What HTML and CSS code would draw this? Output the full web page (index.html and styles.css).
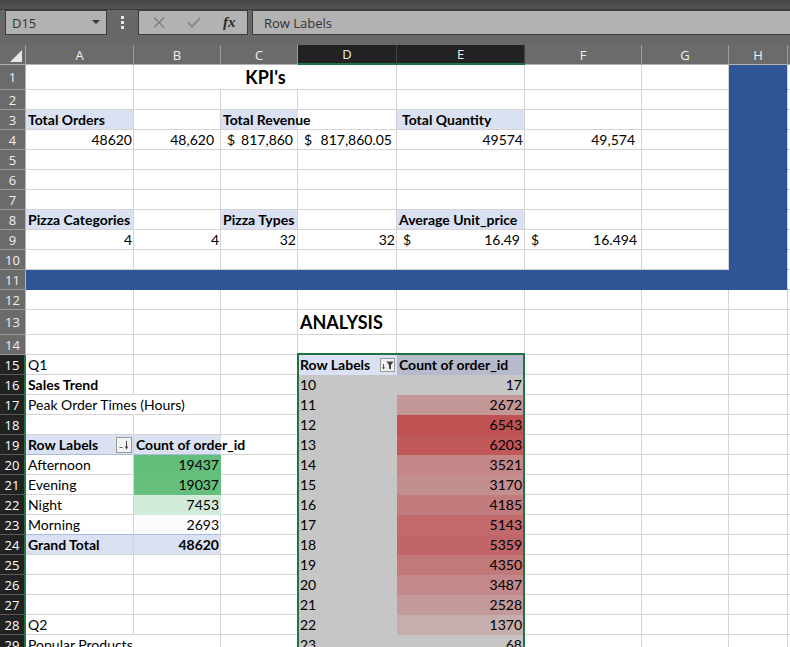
FILE: index.html
```html
<!DOCTYPE html>
<html>
<head>
<meta charset="utf-8">
<title>Pizza Sales - KPI's</title>
<link rel="stylesheet" href="styles.css">
</head>
<body>
<div class="app">
  <div class="topstrip"></div>
  <div class="fbar">
    <div class="namebox"><span>D15</span><svg width="8" height="5" viewBox="0 0 8 5"><polygon points="0,0 8,0 4,4" fill="#333"/></svg></div>
    <div class="dots"><svg width="3" height="13" viewBox="0 0 3 13"><rect x="0" y="0" width="3" height="3" fill="#e6e6e6"/><rect x="0" y="5" width="3" height="3" fill="#e6e6e6"/><rect x="0" y="10" width="3" height="3" fill="#e6e6e6"/></svg></div>
    <div class="btns">
      <span class="fb"><svg width="12" height="11" viewBox="0 0 12 11"><path d="M1 0.5L11 10.5M11 0.5L1 10.5" stroke="#7e7e7e" stroke-width="1.4" fill="none"/></svg></span>
      <span class="fb"><svg width="14" height="11" viewBox="0 0 14 11"><path d="M1 5.5L5 9.5L13 1" stroke="#7e7e7e" stroke-width="1.6" fill="none"/></svg></span>
      <span class="fb fx">fx</span>
    </div>
    <div class="finput">Row Labels</div>
  </div>

  <div class="sheet">
    <!-- column headers -->
    <div class="corner"><svg width="25" height="19" viewBox="0 0 25 19"><polygon points="10,17 22,17 22,5" fill="#e8e8e8"/></svg></div>
    <div class="ch">A</div><div class="ch">B</div><div class="ch">C</div><div class="ch cs">D</div><div class="ch cs">E</div><div class="ch">F</div><div class="ch">G</div><div class="ch">H</div><div class="ch"></div>

    <!-- row 1 -->
    <div class="rh">1</div><div class="c"></div><div class="c title">KPI's</div><div class="c"></div><div class="c"></div><div class="c"></div><div class="c hb"></div><div class="c"></div>
    <!-- row 2 -->
    <div class="rh">2</div><div class="c"></div><div class="c"></div><div class="c"></div><div class="c"></div><div class="c"></div><div class="c"></div><div class="c"></div><div class="c hb"></div><div class="c"></div>
    <!-- row 3 -->
    <div class="rh">3</div><div class="c lb b">Total Orders</div><div class="c"></div><div class="c lb b ov">Total Revenue</div><div class="c"></div><div class="c lb b ind">Total Quantity</div><div class="c"></div><div class="c"></div><div class="c hb"></div><div class="c"></div>
    <!-- row 4 -->
    <div class="rh">4</div><div class="c r">48620</div><div class="c r cm">48,620</div><div class="c acc"><span>$</span><span>817,860</span></div><div class="c acc"><span>$</span><span>817,860.05</span></div><div class="c r">49574</div><div class="c r cm">49,574</div><div class="c"></div><div class="c hb"></div><div class="c"></div>
    <!-- row 5 -->
    <div class="rh">5</div><div class="c"></div><div class="c"></div><div class="c"></div><div class="c"></div><div class="c"></div><div class="c"></div><div class="c"></div><div class="c hb"></div><div class="c"></div>
    <!-- row 6 -->
    <div class="rh">6</div><div class="c"></div><div class="c"></div><div class="c"></div><div class="c"></div><div class="c"></div><div class="c"></div><div class="c"></div><div class="c hb"></div><div class="c"></div>
    <!-- row 7 -->
    <div class="rh">7</div><div class="c"></div><div class="c"></div><div class="c"></div><div class="c"></div><div class="c"></div><div class="c"></div><div class="c"></div><div class="c hb"></div><div class="c"></div>
    <!-- row 8 -->
    <div class="rh">8</div><div class="c lb b">Pizza Categories</div><div class="c"></div><div class="c lb b">Pizza Types</div><div class="c"></div><div class="c lb b">Average Unit_price</div><div class="c"></div><div class="c"></div><div class="c hb"></div><div class="c"></div>
    <!-- row 9 -->
    <div class="rh">9</div><div class="c r">4</div><div class="c r">4</div><div class="c r">32</div><div class="c r">32</div><div class="c acc"><span>$</span><span>16.49</span></div><div class="c acc"><span>$</span><span>16.494</span></div><div class="c"></div><div class="c hb"></div><div class="c"></div>
    <!-- row 10 -->
    <div class="rh">10</div><div class="c"></div><div class="c"></div><div class="c"></div><div class="c"></div><div class="c"></div><div class="c"></div><div class="c"></div><div class="c hb"></div><div class="c"></div>
    <!-- row 11 -->
    <div class="rh">11</div><div class="c bl"></div><div class="c bl"></div><div class="c bl"></div><div class="c bl"></div><div class="c bl"></div><div class="c bl"></div><div class="c bl"></div><div class="c hb"></div><div class="c"></div>
    <!-- row 12 -->
    <div class="rh">12</div><div class="c"></div><div class="c"></div><div class="c"></div><div class="c"></div><div class="c"></div><div class="c"></div><div class="c"></div><div class="c"></div><div class="c"></div>
    <!-- row 13 -->
    <div class="rh">13</div><div class="c"></div><div class="c"></div><div class="c"></div><div class="c big">ANALYSIS</div><div class="c"></div><div class="c"></div><div class="c"></div><div class="c"></div><div class="c"></div>
    <!-- row 14 -->
    <div class="rh">14</div><div class="c"></div><div class="c"></div><div class="c"></div><div class="c"></div><div class="c"></div><div class="c"></div><div class="c"></div><div class="c"></div><div class="c"></div>
    <!-- row 15 -->
    <div class="rh d">15</div><div class="c">Q1</div><div class="c"></div><div class="c"></div>
    <div class="c pv ph1"><span>Row Labels</span><span class="pbtn"><svg width="13" height="12" viewBox="0 0 13 12"><path d="M2.5 5V10" stroke="#555" stroke-width="1"/><polygon points="0.8,8.3 4.2,8.3 2.5,10.6" fill="#555"/><polygon points="5.5,2.5 12.5,2.5 10,6 10,10.5 8,9.5 8,6" fill="#3d3d3d"/></svg></span></div>
    <div class="c pv ph2">Count of order_id</div><div class="c"></div><div class="c"></div><div class="c"></div><div class="c"></div>
    <!-- row 16 -->
    <div class="rh d">16</div><div class="c b">Sales Trend</div><div class="c"></div><div class="c"></div><div class="c pv pd">10</div><div class="c pv pe" style="background:rgb(198,198,198)">17</div><div class="c"></div><div class="c"></div><div class="c"></div><div class="c"></div>
    <!-- row 17 -->
    <div class="rh d">17</div><div class="c ov">Peak Order Times (Hours)</div><div class="c"></div><div class="c"></div><div class="c pv pd">11</div><div class="c pv pe" style="background:rgb(196,151,151)">2672</div><div class="c"></div><div class="c"></div><div class="c"></div><div class="c"></div>
    <!-- row 18 -->
    <div class="rh d">18</div><div class="c"></div><div class="c"></div><div class="c"></div><div class="c pv pd">12</div><div class="c pv pe" style="background:rgb(192,81,83)">6543</div><div class="c"></div><div class="c"></div><div class="c"></div><div class="c"></div>
    <!-- row 19 -->
    <div class="rh d">19</div>
    <div class="c lb b pt"><span>Row Labels</span><span class="sbtn"><svg width="14" height="14" viewBox="0 0 14 14"><path d="M2.5 9.5H5.5" stroke="#666" stroke-width="1"/><path d="M9.5 3V10.5" stroke="#444" stroke-width="1"/><polygon points="7.6,8.6 11.4,8.6 9.5,11.4" fill="#444"/></svg></span></div>
    <div class="c lb b pt ov">Count of order_id</div><div class="c"></div><div class="c pv pd">13</div><div class="c pv pe" style="background:rgb(193,88,89)">6203</div><div class="c"></div><div class="c"></div><div class="c"></div><div class="c"></div>
    <!-- row 20 -->
    <div class="rh d">20</div><div class="c">Afternoon</div><div class="c r nb" style="background:rgb(99,190,123)">19437</div><div class="c"></div><div class="c pv pd">14</div><div class="c pv pe" style="background:rgb(195,135,136)">3521</div><div class="c"></div><div class="c"></div><div class="c"></div><div class="c"></div>
    <!-- row 21 -->
    <div class="rh d">21</div><div class="c">Evening</div><div class="c r nb" style="background:rgb(103,191,126)">19037</div><div class="c"></div><div class="c pv pd">15</div><div class="c pv pe" style="background:rgb(195,142,142)">3170</div><div class="c"></div><div class="c"></div><div class="c"></div><div class="c"></div>
    <!-- row 22 -->
    <div class="rh d">22</div><div class="c">Night</div><div class="c r nb" style="background:rgb(209,234,218)">7453</div><div class="c"></div><div class="c pv pd">16</div><div class="c pv pe" style="background:rgb(194,123,124)">4185</div><div class="c"></div><div class="c"></div><div class="c"></div><div class="c"></div>
    <!-- row 23 -->
    <div class="rh d">23</div><div class="c pt">Morning</div><div class="c r pt" style="background:rgb(252,252,255)">2693</div><div class="c"></div><div class="c pv pd">17</div><div class="c pv pe" style="background:rgb(194,106,108)">5143</div><div class="c"></div><div class="c"></div><div class="c"></div><div class="c"></div>
    <!-- row 24 -->
    <div class="rh d">24</div><div class="c lb b">Grand Total</div><div class="c lb b r">48620</div><div class="c"></div><div class="c pv pd">18</div><div class="c pv pe" style="background:rgb(193,102,104)">5359</div><div class="c"></div><div class="c"></div><div class="c"></div><div class="c"></div>
    <!-- row 25 -->
    <div class="rh d">25</div><div class="c"></div><div class="c"></div><div class="c"></div><div class="c pv pd">19</div><div class="c pv pe" style="background:rgb(194,121,122)">4350</div><div class="c"></div><div class="c"></div><div class="c"></div><div class="c"></div>
    <!-- row 26 -->
    <div class="rh d">26</div><div class="c"></div><div class="c"></div><div class="c"></div><div class="c pv pd">20</div><div class="c pv pe" style="background:rgb(195,136,137)">3487</div><div class="c"></div><div class="c"></div><div class="c"></div><div class="c"></div>
    <!-- row 27 -->
    <div class="rh d">27</div><div class="c"></div><div class="c"></div><div class="c"></div><div class="c pv pd">21</div><div class="c pv pe" style="background:rgb(196,153,154)">2528</div><div class="c"></div><div class="c"></div><div class="c"></div><div class="c"></div>
    <!-- row 28 -->
    <div class="rh d">28</div><div class="c">Q2</div><div class="c"></div><div class="c"></div><div class="c pv pd">22</div><div class="c pv pe" style="background:rgb(197,174,174)">1370</div><div class="c"></div><div class="c"></div><div class="c"></div><div class="c"></div>
    <!-- row 29 -->
    <div class="rh d">29</div><div class="c ov">Popular Products</div><div class="c"></div><div class="c"></div><div class="c pv pd">23</div><div class="c pv pe" style="background:rgb(198,196,196)">68</div><div class="c"></div><div class="c"></div><div class="c"></div><div class="c"></div>

    <div class="selbox"></div>
  </div>
</div>
</body>
</html>
```
FILE: styles.css
```css
* { box-sizing: border-box; margin: 0; padding: 0; }
html, body { width: 790px; height: 647px; overflow: hidden; background: #fff; }
body { font-family: Lato, "Liberation Sans", sans-serif; }

.topstrip { height: 10px; background: linear-gradient(#444, #555); border-bottom: 1px solid #3b3b3b; }

.fbar {
  height: 35px; background: #686868; display: flex; align-items: flex-start;
  padding-left: 5px; font-family: "Open Sans", sans-serif; font-size: 13px; color: #333;
}
.namebox {
  width: 102px; height: 25px; background: #b2b2b2; border: 1px solid #3c3c3c;
  display: flex; align-items: center; justify-content: space-between; padding: 0 6px;
}
.dots { width: 31px; height: 25px; display: flex; align-items: center; justify-content: center; }
.btns {
  width: 110px; height: 25px; background: #b2b2b2; border: 1px solid #3c3c3c;
  display: flex; align-items: center; padding-left: 2px;
}
.fb { width: 36px; display: flex; justify-content: center; align-items: center; }
.fx { font-family: "Liberation Serif", serif; font-style: italic; font-weight: bold; font-size: 15px; color: #2b2b2b; }
.finput {
  flex: 1; height: 25px; margin-left: 4px; background: #b2b2b2; border: 1px solid #3c3c3c;
  border-right: none; display: flex; align-items: center; padding-left: 11px;
}

.sheet {
  position: relative; display: grid;
  grid-template-columns: 26px 108px 87px 77px 99px 128px 117px 87px 59px 1fr;
  grid-template-rows: 20px 25px repeat(11, 20px) 25px repeat(16, 20px);
}

.corner { background: #6b6b6b; border-right: 1px solid #a0a0a0; border-bottom: 1px solid #b0b0b0; }
.ch {
  background: #6b6b6b; color: #efefef; font-family: "Open Sans", sans-serif; font-size: 13px;
  display: flex; align-items: center; justify-content: center;
  border-right: 1px solid #9c9c9c; border-bottom: 1px solid #b3b3b3;
}
.ch.cs { background: #222; border-bottom: 2px solid #217346; border-right-color: #444; }

.rh {
  background: #6b6b6b; color: #efefef; font-family: "Open Sans", sans-serif; font-size: 13px;
  display: flex; align-items: center; justify-content: center;
  border-right: 1px solid #b3b3b3; border-bottom: 1px solid #999;
}
.rh.d { background: #222; color: #fff; border-right: 2px solid #217346; border-bottom-color: #5a5a5a; }

.c {
  display: flex; align-items: flex-end;
  border-right: 1px solid #d4d4d4; border-bottom: 1px solid #d4d4d4;
  padding: 0 1px 0 2px; font-size: 14px; line-height: 19px; white-space: nowrap; color: #000;
}
.r { justify-content: flex-end; }
.b { font-weight: bold; }
.lb { background: #d9e1f2; }
.ov { border-right-color: transparent; }
.ind { padding-left: 5px; }
.cm { padding-right: 6px; }
.acc { justify-content: space-between; padding: 0 4px 0 6px; }
.bl { background: #2f5597; border-color: transparent; }
.hb { background: #2f5597; border-bottom-color: transparent; }
.title { grid-column: span 3; justify-content: center; font-weight: bold; font-size: 18px; line-height: 24px; }
.big { font-weight: bold; font-size: 18px; line-height: 24px; }

.pv { border-color: transparent; }
.pd { background: #c6c6c6; }
.pe { justify-content: flex-end; padding-right: 2px; }
.ph1 { background: #d9e1f2; font-weight: bold; }
.ph2 { background: #b5bbca; font-weight: bold; }
.pt { border-bottom-color: #a9bbdf; }
.nb { border-color: transparent; }

.pbtn, .sbtn {
  margin-left: auto; align-self: center; display: flex; align-items: center; justify-content: center;
  background: #f2f2f2; border: 1px solid #9a9a9a;
}
.pbtn { width: 15px; height: 14px; }
.sbtn { width: 16px; height: 16px; }

.selbox {
  position: absolute; left: 297px; top: 308px; width: 228px; height: 400px;
  border: 2px solid #217346; pointer-events: none;
}
```
